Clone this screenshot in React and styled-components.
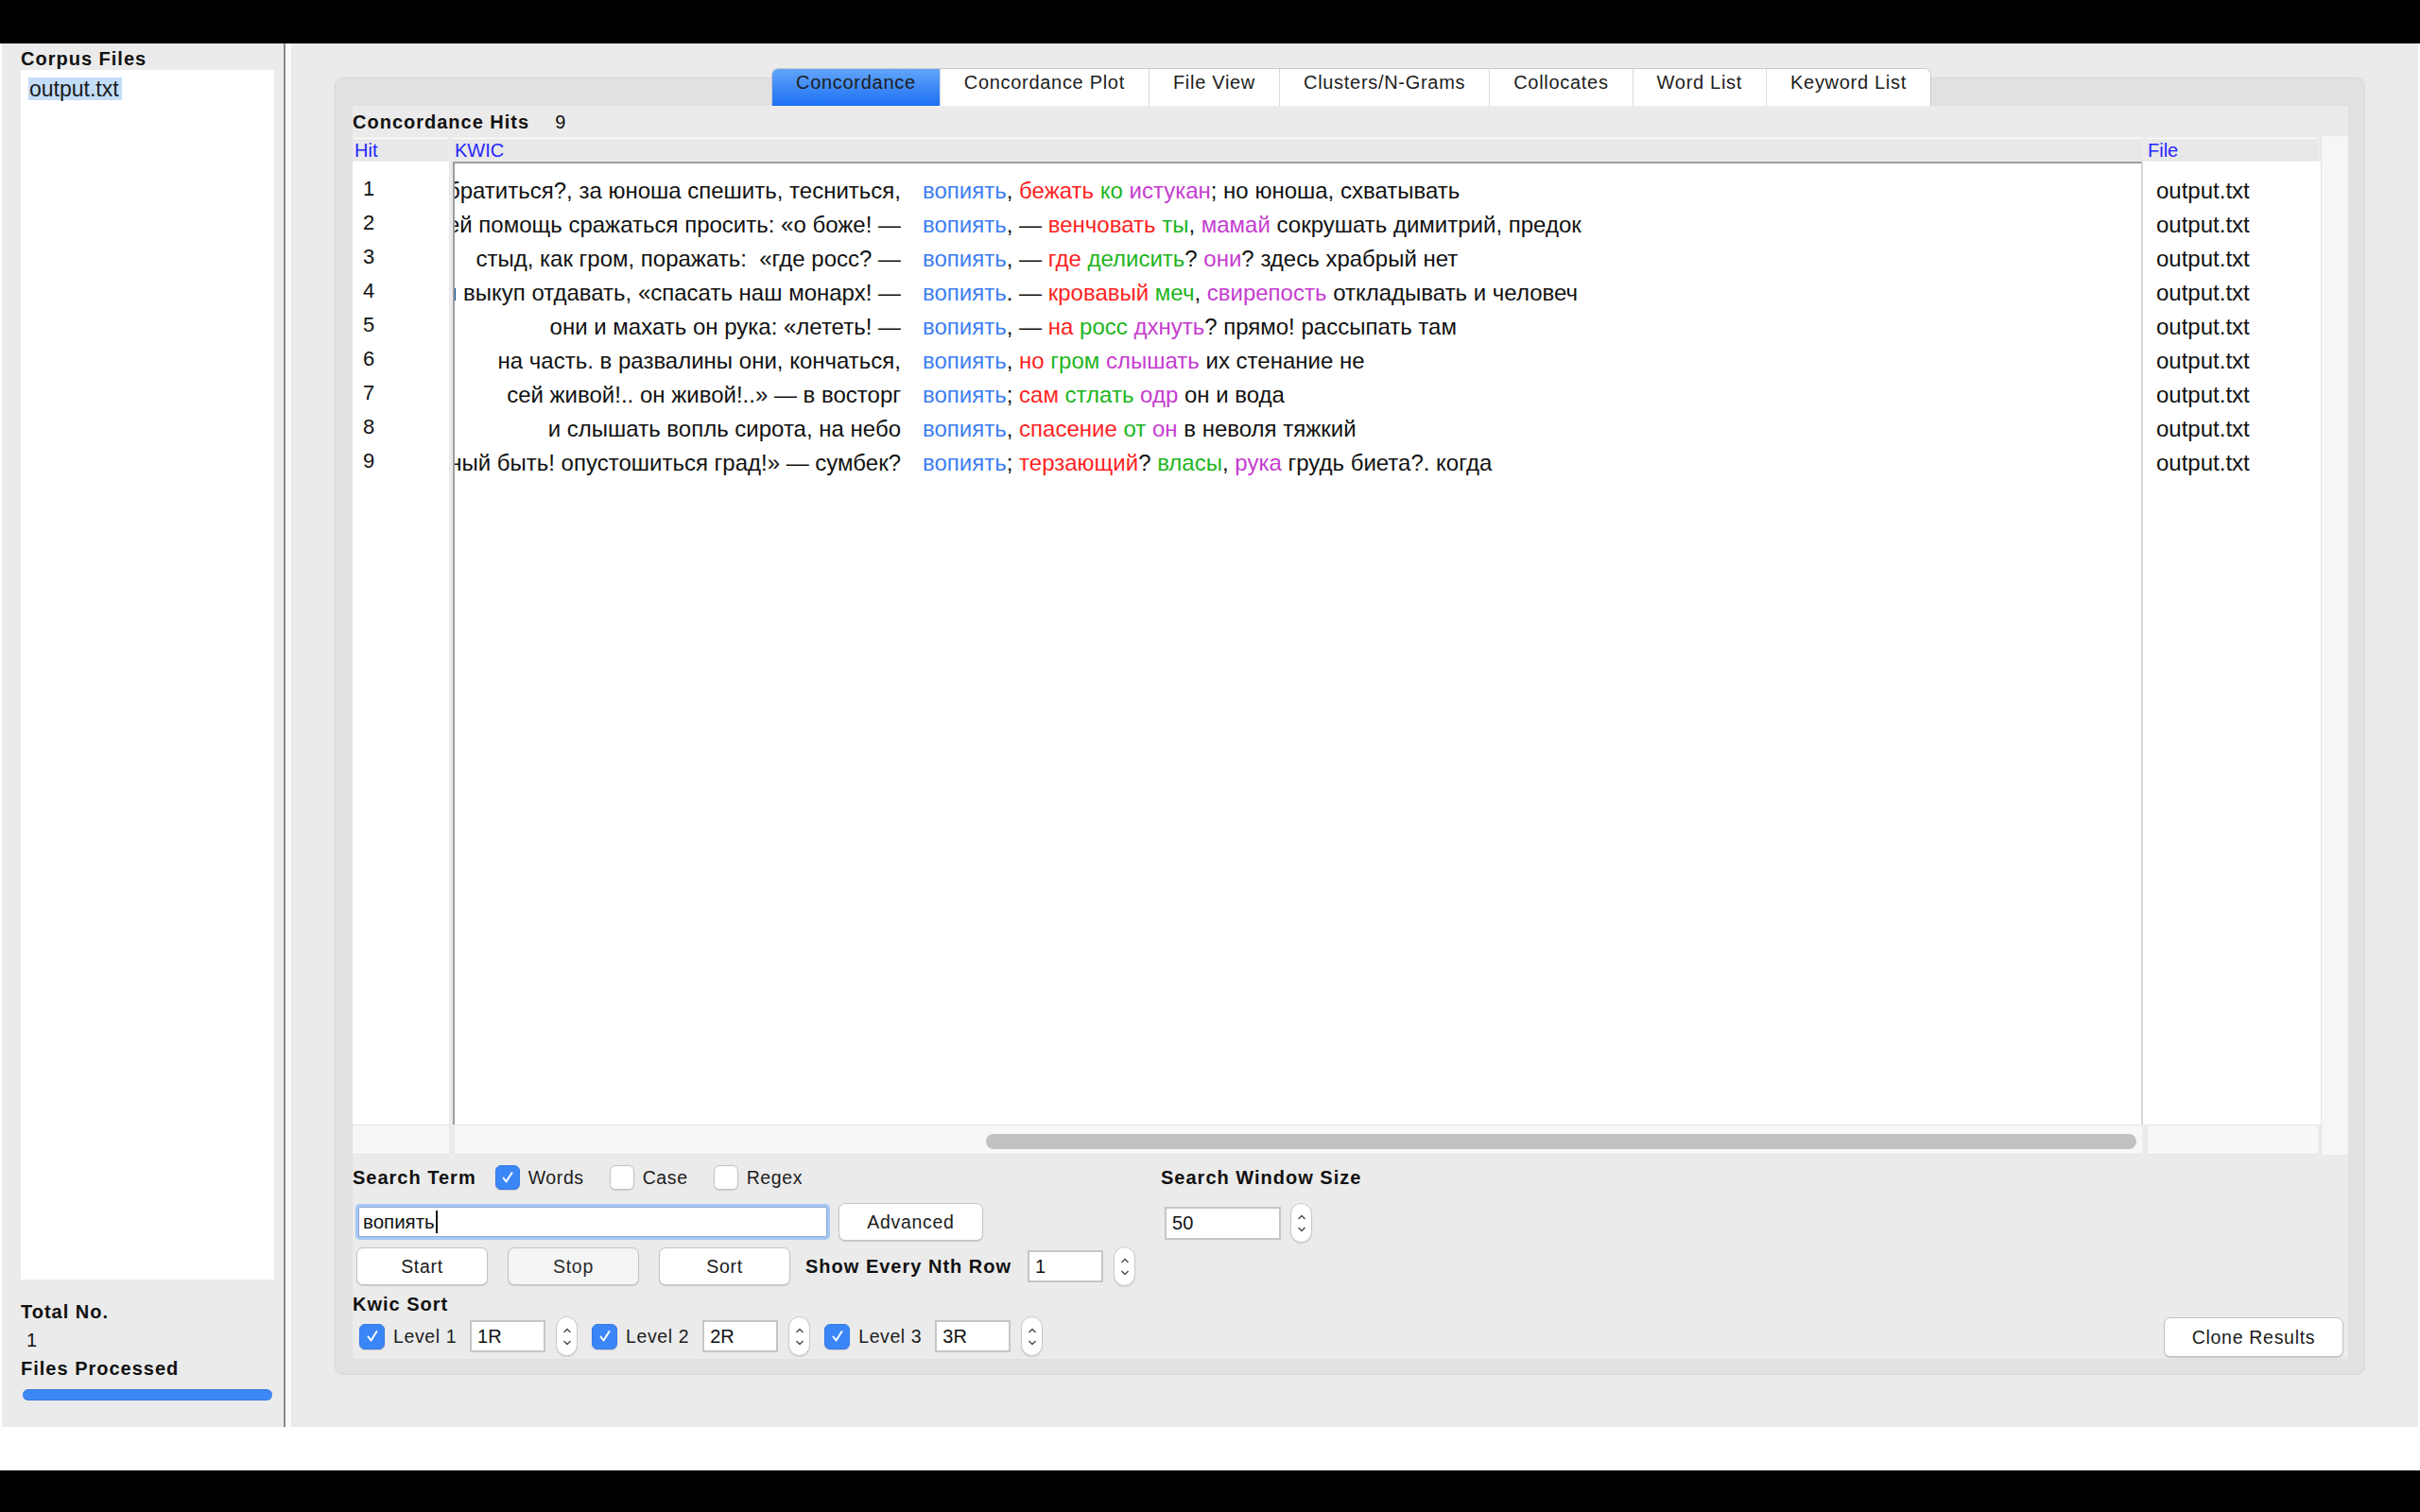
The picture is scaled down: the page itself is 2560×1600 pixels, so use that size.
import React from 'react';
import styled, { createGlobalStyle } from 'styled-components';

const GlobalStyle = createGlobalStyle`
  html, body { margin: 0; padding: 0; background: #000; }
  body { font-family: "Liberation Sans", Arial, sans-serif; color: #111; }
  * { box-sizing: border-box; }
`;

const rows = [
  { left: 'обратиться?, за юноша спешить, тесниться,', right: [['вопиять', 'k'], [', '], ['бежать', 'r'], [' '], ['ко', 'g'], [' '], ['истукан', 'm'], ['; но юноша, схватывать']] },
  { left: 'своей помощь сражаться просить: «о боже! —', right: [['вопиять', 'k'], [', — '], ['венчовать', 'r'], [' '], ['ты', 'g'], [', '], ['мамай', 'm'], [' сокрушать димитрий, предок']] },
  { left: 'стыд, как гром, поражать:  «где росс? —', right: [['вопиять', 'k'], [', — '], ['где', 'r'], [' '], ['делисить', 'g'], ['? '], ['они', 'm'], ['? здесь храбрый нет']] },
  { left: 'и выкуп отдавать, «спасать наш монарх! —', right: [['вопиять', 'k'], ['. — '], ['кровавый', 'r'], [' '], ['меч', 'g'], [', '], ['свирепость', 'm'], [' откладывать и человеч']] },
  { left: 'они и махать он рука: «лететь! —', right: [['вопиять', 'k'], [', — '], ['на', 'r'], [' '], ['росс', 'g'], [' '], ['дхнуть', 'm'], ['? прямо! рассыпать там']] },
  { left: 'на часть. в развалины они, кончаться,', right: [['вопиять', 'k'], [', '], ['но', 'r'], [' '], ['гром', 'g'], [' '], ['слышать', 'm'], [' их стенание не']] },
  { left: 'сей живой!.. он живой!..» — в восторг', right: [['вопиять', 'k'], ['; '], ['сам', 'r'], [' '], ['стлать', 'g'], [' '], ['одр', 'm'], [' он и вода']] },
  { left: 'и слышать вопль сирота, на небо', right: [['вопиять', 'k'], [', '], ['спасение', 'r'], [' '], ['от', 'g'], [' '], ['он', 'm'], [' в неволя тяжкий']] },
  { left: 'страшный быть! опустошиться град!» — сумбек?', right: [['вопиять', 'k'], ['; '], ['терзающий', 'r'], ['? '], ['власы', 'g'], [', '], ['рука', 'm'], [' грудь биета?. когда']] },
];

const tabs = ['Concordance', 'Concordance Plot', 'File View', 'Clusters/N-Grams', 'Collocates', 'Word List', 'Keyword List'];

const hitColors = { k: '#3d7ef2', r: '#ff1f1f', g: '#1eb51e', m: '#c53ccf' };

const Screen = styled.div`
  width: 2560px;
  height: 1600px;
  padding-top: 46px;
  background: #000;
`;

const Window = styled.div`
  height: 1510px;
  background: #fff;
  padding-left: 2px;
  padding-right: 2px;
`;

const AppFrame = styled.div`
  height: 1464px;
  display: flex;
  background: #ebebeb;
`;

const Sidebar = styled.div`
  width: 298px;
  padding: 4px 10px 0 20px;
  display: flex;
  flex-direction: column;
`;

const BoldLabel = styled.div`
  font-weight: bold;
  font-size: 20px;
  letter-spacing: 1px;
  line-height: 24px;
  height: 24px;
  color: #111;
  white-space: nowrap;
`;

const FileList = styled.div`
  height: 1280px;
  background: #fff;
  padding: 8px 0 0 8px;
`;

const FileItem = styled.span`
  display: inline-block;
  background: #c4ddf7;
  padding: 0 3px 0 1px;
  font-size: 23px;
  line-height: 24px;
  color: #1a1a1a;
`;

const SideValue = styled.div`
  font-size: 20px;
  line-height: 24px;
  height: 24px;
  padding-left: 6px;
  margin: 6px 0;
`;

const Progress = styled.div`
  margin: 10px 0 0 2px;
  width: 264px;
  height: 12px;
  border-radius: 6px;
  background: #3e88f5;
  border-top: 1px solid #3378e0;
  border-bottom: 1px solid #3378e0;
`;

const Divider = styled.div`
  width: 8px;
  border-left: 2px solid #8b8b8b;
  background: #fafafa;
`;

const Main = styled.div`
  flex: 1;
  display: flex;
  padding: 36px 56px 55px 46px;
`;

const PanelBox = styled.div`
  flex: 1;
  display: flex;
  flex-direction: column;
  background: #e1e1e1;
  border: 1px solid #d7d7d7;
  border-radius: 9px;
  padding: 0 17px 16px 18px;
`;

const TabStrip = styled.div`
  align-self: center;
  display: flex;
  height: 40px;
  margin-top: -11px;
  margin-left: 2px;
  background: #fff;
  border: 1px solid #cacaca;
  border-bottom: none;
  border-radius: 7px 7px 0 0;
  overflow: hidden;
`;

const Tab = styled.div`
  padding: 3px 25px 0;
  font-size: 20px;
  letter-spacing: 0.7px;
  color: #1c1c1c;
  white-space: nowrap;
  border-left: ${p => (p.$first ? 'none' : '1px solid #dadada')};
  background: ${p => (p.$active ? 'linear-gradient(#62a4fa, #1c70f3)' : '#fff')};
`;

const InnerPanel = styled.div`
  flex: 1;
  display: flex;
  flex-direction: column;
  background: #ebebeb;
`;

const HitsRow = styled.div`
  height: 34px;
  display: flex;
  align-items: center;
  gap: 27px;
`;

const Plain = styled.span`
  font-size: 20px;
  color: #111;
`;

const Table = styled.div`
  flex: 1;
  display: grid;
  grid-template-columns: 106px 1fr 189px 29px;
  grid-template-rows: 25px 1fr 32px;
`;

const HeadCell = styled.div`
  background: #e8e8e8;
  color: #2626ff;
  font-size: 20px;
  line-height: 24px;
  height: 24px;
  margin: 0 ${p => p.$mr || 0}px 0 ${p => p.$ml || 0}px;
  padding-left: ${p => p.$pl || 0}px;
  border-top: 1px solid #fff;
`;

const HitBody = styled.div`
  background: #fff;
  margin-right: 4px;
  padding-top: 11px;
`;

const HitNum = styled.div`
  height: 36px;
  line-height: 36px;
  font-size: 22px;
  padding-left: 11px;
  color: #111;
`;

const KwicBody = styled.div`
  background: #fff;
  border-top: 2px solid #9d9d9d;
  border-left: 2px solid #9d9d9d;
  border-right: 1px solid #d6d6d6;
  padding-top: 11px;
  overflow: hidden;
`;

const KwicRow = styled.div`
  display: grid;
  grid-template-columns: 472px 1fr;
  column-gap: 23px;
  height: 36px;
  align-items: center;
  font-size: 24px;
  white-space: pre;
  color: #111;
`;

const LeftCtx = styled.div`
  display: flex;
  justify-content: flex-end;
  overflow: hidden;
`;

const Word = styled.span`
  color: ${p => hitColors[p.$c] || '#111'};
`;

const FileBody = styled.div`
  background: #fff;
  border-left: 1px solid #d8d8d8;
  border-top: 2px solid #fff;
  padding: 11px 0 0 14px;
`;

const FileName = styled.div`
  height: 36px;
  line-height: 36px;
  font-size: 24px;
  color: #111;
`;

const VScroll = styled.div`
  grid-row: 1 / 4;
  grid-column: 4;
  background: #f6f6f6;
  border-left: 1px solid #e2e2e2;
  margin-top: -2px;
`;

const ScrollCell = styled.div`
  display: flex;
  background: #f7f7f7;
  border-top: 1px solid #e2e2e2;
  border-bottom: 1px solid #e2e2e2;
  margin: 0 ${p => p.$mr || 0}px 0 ${p => p.$ml || 0}px;
  padding: 9px 6px 0 ${p => p.$thumbLeft || 0}px;
`;

const Thumb = styled.div`
  flex: 1;
  height: 16px;
  border-radius: 8px;
  background: #c1c1c1;
`;

const Controls = styled.div`
  display: flex;
  height: 216px;
`;

const Column = styled.div`
  display: flex;
  flex-direction: column;
`;

const ControlRow = styled.div`
  display: flex;
  align-items: center;
  height: ${p => p.$h}px;
  margin-top: ${p => p.$mt}px;
  padding-left: ${p => p.$pl || 0}px;
`;

const CheckItem = styled.label`
  display: flex;
  align-items: center;
  gap: 9px;
  margin-left: ${p => p.$ml || 0}px;
  font-size: 19.5px;
  letter-spacing: 0.6px;
  color: #1d1d1d;
`;

const Box = styled.span`
  width: ${p => p.$size || 26}px;
  height: ${p => p.$size || 26}px;
  border-radius: 6px;
  display: inline-flex;
  align-items: center;
  justify-content: center;
  background: ${p => (p.$on ? '#3b86f7' : '#fff')};
  border: 1px solid ${p => (p.$on ? '#3479e4' : '#c2c2c2')};
  box-shadow: 0 1px 1px rgba(0, 0, 0, 0.12);
`;

const SearchField = styled.div`
  width: 496px;
  height: 32px;
  margin-left: 6px;
  border: 1px solid #8ca8d2;
  box-shadow: 0 0 0 3px #a6c8f4;
  border-radius: 2px;
  background: #fff;
  display: flex;
  align-items: center;
  padding-left: 4px;
  font-size: 20.5px;
  color: #111;
`;

const Caret = styled.span`
  display: inline-block;
  width: 2px;
  height: 24px;
  background: #111;
  margin-left: 1px;
`;

const Button = styled.div`
  width: ${p => p.$w}px;
  height: ${p => p.$h || 40}px;
  margin-left: ${p => p.$ml || 0}px;
  border: 1px solid #c3c3c3;
  border-radius: 7px;
  background: ${p => (p.$dim ? '#f4f4f4' : '#fff')};
  box-shadow: 0 1px 1px rgba(0, 0, 0, 0.14);
  display: flex;
  align-items: center;
  justify-content: center;
  font-size: 19.5px;
  letter-spacing: 0.7px;
  color: ${p => (p.$dim ? '#2b2b2b' : '#1b1b1b')};
  white-space: nowrap;
`;

const NumField = styled.div`
  width: ${p => p.$w}px;
  height: ${p => p.$h || 34}px;
  margin-left: ${p => p.$ml || 0}px;
  border: 2px solid #c6c6c6;
  background: #fff;
  display: flex;
  align-items: center;
  padding-left: 6px;
  font-size: 20px;
  color: #111;
`;

const StepperBox = styled.div`
  width: 23px;
  height: 42px;
  margin-left: ${p => p.$ml || 11}px;
  border: 1px solid #c8c8c8;
  border-radius: 12px;
  background: #fff;
  box-shadow: 0 1px 1px rgba(0, 0, 0, 0.1);
  display: flex;
  flex-direction: column;
  align-items: center;
  justify-content: center;
  gap: 7px;
`;

const LevelLabel = styled.span`
  font-size: 19.5px;
  letter-spacing: 0.6px;
  color: #1d1d1d;
  margin: 0 14px 0 9px;
  white-space: nowrap;
`;

const RightGroup = styled(Column)`
  margin-left: 27px;
`;

const CloneButton = styled(Button)`
  margin-left: auto;
  align-self: flex-end;
  margin-bottom: 2px;
  margin-right: 5px;
`;

const Check = () => (
  <svg width="16" height="16" viewBox="0 0 16 16">
    <path d="M3.5 8.5 L6.5 12.5 L12.5 3" stroke="#fff" strokeWidth="2" fill="none" strokeLinecap="round" strokeLinejoin="round" />
  </svg>
);

const Stepper = ({ ml }) => (
  <StepperBox $ml={ml}>
    <svg width="10" height="6" viewBox="0 0 10 6">
      <path d="M1.5 5 L5 1.5 L8.5 5" stroke="#4a4a4a" strokeWidth="1.4" fill="none" />
    </svg>
    <svg width="10" height="6" viewBox="0 0 10 6">
      <path d="M1.5 1 L5 4.5 L8.5 1" stroke="#4a4a4a" strokeWidth="1.4" fill="none" />
    </svg>
  </StepperBox>
);

const Level = ({ n, value, first }) => (
  <>
    <Box $on $size={27} style={{ marginLeft: first ? 7 : 15 }}>
      <Check />
    </Box>
    <LevelLabel>Level {n}</LevelLabel>
    <NumField $w={80}>{value}</NumField>
    <Stepper />
  </>
);

export default function App() {
  return (
    <Screen>
      <GlobalStyle />
      <Window>
        <AppFrame>
          <Sidebar>
            <BoldLabel>Corpus Files</BoldLabel>
            <FileList>
              <FileItem>output.txt</FileItem>
            </FileList>
            <BoldLabel style={{ marginTop: 22 }}>Total No.</BoldLabel>
            <SideValue>1</SideValue>
            <BoldLabel>Files Processed</BoldLabel>
            <Progress />
          </Sidebar>
          <Divider />
          <Main>
            <PanelBox>
              <TabStrip>
                {tabs.map((t, i) => (
                  <Tab key={t} $first={i === 0} $active={i === 0}>{t}</Tab>
                ))}
              </TabStrip>
              <InnerPanel>
                <HitsRow>
                  <BoldLabel>Concordance Hits</BoldLabel>
                  <Plain>9</Plain>
                </HitsRow>
                <Table>
                  <HeadCell $ml={2} $mr={5}>Hit</HeadCell>
                  <HeadCell $pl={2}>KWIC</HeadCell>
                  <HeadCell $ml={6} $mr={3}>File</HeadCell>
                  <VScroll />
                  <HitBody>
                    {rows.map((r, i) => <HitNum key={i}>{i + 1}</HitNum>)}
                  </HitBody>
                  <KwicBody>
                    {rows.map((r, i) => (
                      <KwicRow key={i}>
                        <LeftCtx><span>{r.left}</span></LeftCtx>
                        <div>
                          {r.right.map(([text, c], j) => <Word key={j} $c={c}>{text}</Word>)}
                        </div>
                      </KwicRow>
                    ))}
                  </KwicBody>
                  <FileBody>
                    {rows.map((r, i) => <FileName key={i}>output.txt</FileName>)}
                  </FileBody>
                  <ScrollCell $mr={4} />
                  <ScrollCell $ml={2} $thumbLeft={562}>
                    <Thumb />
                  </ScrollCell>
                  <ScrollCell $ml={6} $mr={3} />
                </Table>
                <Controls>
                  <Column>
                    <ControlRow $h={26} $mt={11}>
                      <BoldLabel>Search Term</BoldLabel>
                      <CheckItem $ml={20}><Box $on><Check /></Box>Words</CheckItem>
                      <CheckItem $ml={27}><Box />Case</CheckItem>
                      <CheckItem $ml={27}><Box />Regex</CheckItem>
                    </ControlRow>
                    <ControlRow $h={40} $mt={14}>
                      <SearchField>вопиять<Caret /></SearchField>
                      <Button $w={153} $ml={12}>Advanced</Button>
                    </ControlRow>
                    <ControlRow $h={42} $mt={6} $pl={4}>
                      <Button $w={139}>Start</Button>
                      <Button $w={139} $ml={21} $dim>Stop</Button>
                      <Button $w={139} $ml={21}>Sort</Button>
                      <BoldLabel style={{ marginLeft: 16 }}>Show Every Nth Row</BoldLabel>
                      <NumField $w={80} $ml={17}>1</NumField>
                      <Stepper />
                    </ControlRow>
                    <ControlRow $h={22} $mt={8}>
                      <BoldLabel>Kwic Sort</BoldLabel>
                    </ControlRow>
                    <ControlRow $h={42} $mt={2}>
                      <Level n={1} value="1R" first />
                      <Level n={2} value="2R" />
                      <Level n={3} value="3R" />
                    </ControlRow>
                  </Column>
                  <RightGroup>
                    <ControlRow $h={26} $mt={11}>
                      <BoldLabel>Search Window Size</BoldLabel>
                    </ControlRow>
                    <ControlRow $h={42} $mt={14} $pl={4}>
                      <NumField $w={123} $h={35}>50</NumField>
                      <Stepper ml={10} />
                    </ControlRow>
                  </RightGroup>
                  <CloneButton $w={190} $h={42}>Clone Results</CloneButton>
                </Controls>
              </InnerPanel>
            </PanelBox>
          </Main>
        </AppFrame>
      </Window>
    </Screen>
  );
}
